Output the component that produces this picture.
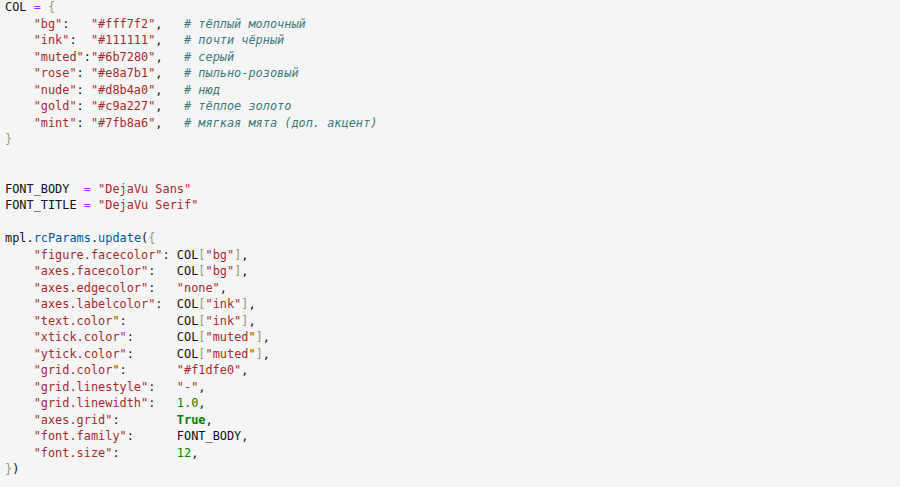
import React from "react";

type Tok = [string, string];

const cls: Record<string, string> = {
  t: "text-[#111111]",
  s: "text-[#a62b2b]",
  c: "text-[#3d7b7b] italic",
  o: "text-[#aa22ff]",
  b: "text-[#999977]",
  p: "text-[#0055aa]",
  n: "text-[#008800]",
  k: "text-[#008000] font-bold",
};

const pad = (key: string, col: number) => "    " + key + ":" + " ".repeat(Math.max(0, col - 5 - key.length));

const colLine = (key: string, val: string, comment: string): Tok[] => [
  ["t", "    "],
  ["s", key],
  ["t", ":" + " ".repeat(Math.max(0, 12 - 5 - key.length))],
  ["s", val],
  ["t", ",   "],
  ["c", comment],
];

const rcKey = (key: string): Tok[] => [
  ["t", "    "],
  ["s", key],
  ["t", pad(key, 24).slice(4 + key.length)],
];

const lines: Tok[][] = [
  [["t", "COL "], ["o", "="], ["t", " "], ["b", "{"]],
  colLine('"bg"', '"#fff7f2"', "# тёплый молочный"),
  colLine('"ink"', '"#111111"', "# почти чёрный"),
  colLine('"muted"', '"#6b7280"', "# серый"),
  colLine('"rose"', '"#e8a7b1"', "# пыльно-розовый"),
  colLine('"nude"', '"#d8b4a0"', "# нюд"),
  colLine('"gold"', '"#c9a227"', "# тёплое золото"),
  colLine('"mint"', '"#7fb8a6"', "# мягкая мята (доп. акцент)"),
  [["b", "}"]],
  [],
  [],
  [["t", "FONT_BODY  "], ["o", "="], ["t", " "], ["s", '"DejaVu Sans"']],
  [["t", "FONT_TITLE "], ["o", "="], ["t", " "], ["s", '"DejaVu Serif"']],
  [],
  [["t", "mpl."], ["p", "rcParams"], ["t", "."], ["p", "update"], ["t", "("], ["b", "{"]],
  [...rcKey('"figure.facecolor"'), ["t", "COL"], ["b", "["], ["s", '"bg"'], ["b", "]"], ["t", ","]],
  [...rcKey('"axes.facecolor"'), ["t", "COL"], ["b", "["], ["s", '"bg"'], ["b", "]"], ["t", ","]],
  [...rcKey('"axes.edgecolor"'), ["s", '"none"'], ["t", ","]],
  [...rcKey('"axes.labelcolor"'), ["t", "COL"], ["b", "["], ["s", '"ink"'], ["b", "]"], ["t", ","]],
  [...rcKey('"text.color"'), ["t", "COL"], ["b", "["], ["s", '"ink"'], ["b", "]"], ["t", ","]],
  [...rcKey('"xtick.color"'), ["t", "COL"], ["b", "["], ["s", '"muted"'], ["b", "]"], ["t", ","]],
  [...rcKey('"ytick.color"'), ["t", "COL"], ["b", "["], ["s", '"muted"'], ["b", "]"], ["t", ","]],
  [...rcKey('"grid.color"'), ["s", '"#f1dfe0"'], ["t", ","]],
  [...rcKey('"grid.linestyle"'), ["s", '"-"'], ["t", ","]],
  [...rcKey('"grid.linewidth"'), ["n", "1.0"], ["t", ","]],
  [...rcKey('"axes.grid"'), ["k", "True"], ["t", ","]],
  [...rcKey('"font.family"'), ["t", "FONT_BODY,"]],
  [...rcKey('"font.size"'), ["n", "12"], ["t", ","]],
  [["b", "}"], ["t", ")"]],
];

export default function App() {
  return (
    <div className="w-[900px] h-[487px] overflow-hidden bg-[#f5f5f5]">
      <pre
        className="mt-[-1px] px-[5px] text-[11.9px] leading-[16.5px] whitespace-pre text-black"
        style={{ fontFamily: '"DejaVu Sans Mono", "Liberation Mono", monospace' }}
      >
        {lines.map((ln, i) => (
          <div key={i} className="h-[16.5px]">
            {ln.map(([k, txt], j) => (
              <span key={j} className={cls[k]}>
                {txt}
              </span>
            ))}
            {ln.length === 0 ? "\u00a0" : null}
          </div>
        ))}
      </pre>
    </div>
  );
}
